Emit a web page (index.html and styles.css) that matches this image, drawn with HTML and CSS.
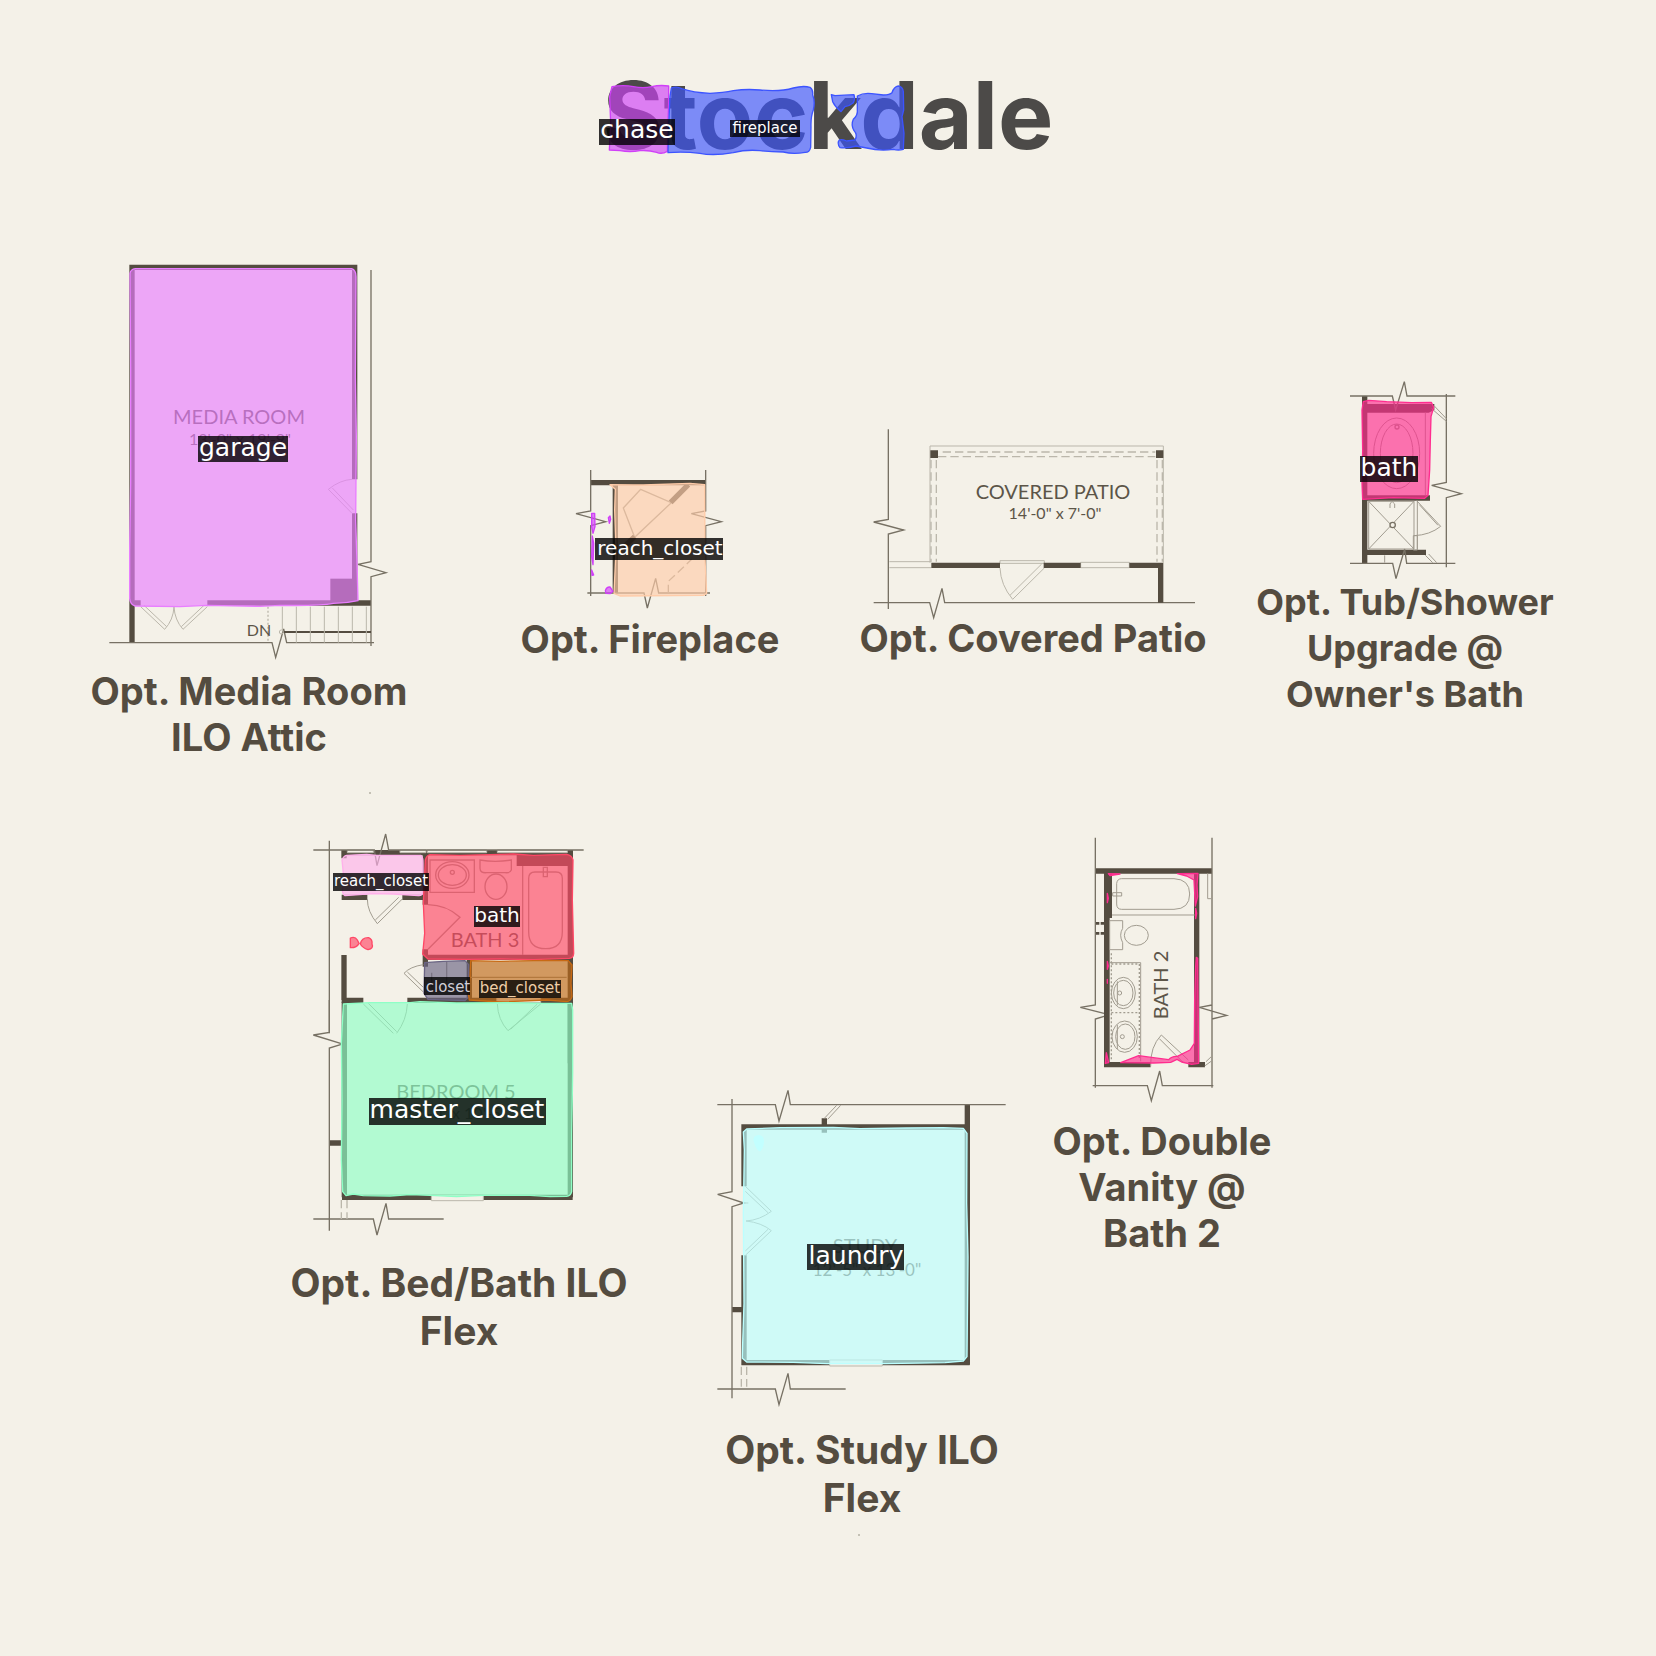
FILE: index.html
```html
<!DOCTYPE html>
<html lang="en">
<head>
<meta charset="utf-8">
<title>Stockdale floor plan options</title>
<link rel="stylesheet" href="styles.css">
</head>
<body>
<header class="title">
  <h1>Stockdale</h1>
  <svg class="title-masks" viewBox="598 60 460 110" aria-hidden="true">
    <g transform="translate(580 60) scale(.33333)">
      <path class="mask violet" d="M96 80Q130 74 160 80Q190 86 215 80Q240 74 266 78L266 130L264 180L262 274Q245 284 230 277Q205 270 180 272Q150 277 120 272L88 270L92 190L89 110Z"/>
      <path class="mask blue" d="M274 84Q290 78 305 86Q340 98 390 100Q430 98 460 92Q500 86 540 90Q600 96 640 84Q670 76 690 82Q700 90 698 104Q706 125 700 150Q692 170 693 200L692 262Q688 278 675 277Q640 284 610 276Q570 276 540 272Q500 268 460 278Q400 288 360 280Q310 274 264 278L266 200L270 110Z"/>
      <path class="mask blue" d="M754 104L765 107L822 104Q826 115 820 128Q808 138 795 140L783 155Q765 140 758 125Z"/>
      <path class="mask blue" d="M832 108Q850 98 875 101L910 105Q930 104 936 98Q942 80 955 78Q968 80 970 95L971 150L966 170L972 220L970 268Q955 272 940 268Q900 274 860 264L828 258Q800 266 780 263Q770 250 778 240Q785 237 800 243L825 240Q834 225 822 212Q812 195 820 178Q834 165 832 150Z"/>
    </g>
    <rect class="tag-bg" x="599" y="119" width="76" height="26"/><text class="tag large" x="637" y="138">chase</text>
    <rect class="tag-bg" x="730" y="120" width="70" height="17"/><text class="tag small" x="765" y="133">fireplace</text>
  </svg>
</header>

<main>
<section class="row first">
  <figure class="media">
    <svg width="320" height="404" viewBox="89 264 320 404">
      <g transform="translate(80 250) scale(.33333)">
        <path class="wall" d="M156 1178V52H824V688M824 790V1059M149 1059H182M382 1059H873"/>
        <path class="solid" d="M751 986H832V1060H751Z"/>
        <path class="line" d="M873 60V935L834 943L918 968L873 980V1188M88 1178H576L587 1222L611 1137L620 1178H882"/>
        <path class="heavy" d="M610 1146H873"/>
        <path class="thin" d="M607 1070V1140M649 1070V1178M691 1070V1178M733 1070V1178M775 1070V1178M817 1070V1178M859 1070V1178M816 688Q780 690 745 718L816 790M757 714L820 780M182 1070L254 1138Q280 1110 282 1070Q284 1110 309 1138L382 1070M192 1066L260 1130M372 1066L304 1130"/>
        <circle class="thin" cx="604" cy="1146" r="6"/>
        <path class="thin dots" d="M564 1070V1175"/>
      </g>
      <text class="room" x="239" y="424">MEDIA ROOM</text>
      <text class="room dim" x="240" y="445">13'-0" x 19'-9"</text>
      <text class="room stairs" x="259" y="636">DN</text>
      <g transform="translate(80 250) scale(.33333)">
        <path class="mask orchid" d="M166 56H815Q828 60 828 80L826 380L829 560L827 810L831 940L834 1052Q800 1060 760 1060Q720 1068 600 1066L540 1069L380 1066L300 1070L166 1068Q150 1064 149 1045V900L152 700V350L150 70Q152 58 166 56Z"/>
      </g>
      <rect class="tag-bg" x="198" y="436" width="90" height="26"/><text class="tag large" x="243" y="456">garage</text>
    </svg>
    <figcaption>Opt. Media Room<br>ILO Attic</figcaption>
  </figure>

  <figure class="fireplace">
    <svg width="220" height="152" viewBox="540 464 220 152">
      <g transform="translate(510 450) scale(.33333)">
        <path class="wall" d="M242 98H587M316 104V430"/>
        <path class="line" d="M242 60V183L198 191L287 215L242 227V438M587 60V183L544 191L634 215L587 227V438M232 429H402L412 474L437 385L446 429H600"/>
        <path class="thin mid" d="M392 118L484 158L374 262L340 174Z"/>
        <path class="thin mid dashes" d="M475 429V394L545 328"/>
        <path class="wall" d="M482 157L535 104M340 292L374 260"/>
        <path class="mask peach" d="M300 104Q340 104 400 105L540 100L584 104L585 330L590 430L580 436L330 438L312 430L318 300L314 180L316 118Z"/>
        <path class="mask purple" d="M245 190H254L255 230L249 250L245 230ZM247 258L251 280L249 344L245 320ZM245 360L251 375L246 376ZM295 203L300 198L302 208L298 220ZM286 422Q290 410 300 411L309 424L300 431L288 430Z"/>
      </g>
      <rect class="tag-bg" x="595" y="538" width="128" height="22"/><text class="tag medium" x="660" y="555">reach_closet</text>
    </svg>
    <figcaption>Opt. Fireplace</figcaption>
  </figure>

  <figure class="patio">
    <svg width="340" height="191" viewBox="863 424 340 191">
      <g transform="translate(850 410) scale(.33333)">
        <path class="line" d="M115 58V328L71 336L161 360L115 372V597M71 578H239L251 623L276 535L284 578H1035"/>
        <path class="thin" d="M240 458V108H940V458M118 455H244M118 473H244M450 452H583V460H450ZM450 474Q452 525 488 568L583 474M480 556L575 462M692 457H838V473H692Z"/>
        <path class="thin dashes" d="M278 126H916M264 140H916M243 150V455M259 150V455M921 150V455M937 150V455"/>
        <path class="wall" d="M244 466H450M581 466H692M838 466H940M932 466V578"/>
        <path class="solid" d="M241 121H264V144H241ZM918 121H940V144H918Z"/>
      </g>
      <text class="room" x="1053" y="499">COVERED PATIO</text>
      <text class="room dim" x="1055" y="519">14'-0" x 7'-0"</text>
    </svg>
    <figcaption>Opt. Covered Patio</figcaption>
  </figure>

  <figure class="tub">
    <svg width="200" height="199" viewBox="1305 380 200 199">
      <g transform="translate(1240 370) scale(.33333)">
        <path class="wall" d="M374 78V580M374 384H570M374 547H558"/>
        <path class="solid" d="M374 102H583V120L566 128H374Z"/>
        <path class="line" d="M330 78H457L467 120L493 35L501 78H646M619 72V337L575 346L664 371L619 383V592M330 580H458L468 626L494 537L500 580H646"/>
        <path class="thin grey" d="M583 108L619 146M575 116L619 154M386 394H522V537H386ZM386 394L522 537M522 394L386 537M532 392V540M530 392L602 469Q570 495 522 497M538 404L594 466M520 497H532V540H520ZM434 556V578M556 556L578 578M566 552L590 578M556 128V376M450 414V402L456 394L464 402V414"/>
        <circle class="line bg" cx="458" cy="465" r="8"/>
        <ellipse class="thin grey" cx="470" cy="250" rx="69" ry="106"/><ellipse class="thin grey" cx="470" cy="250" rx="49" ry="88"/><circle class="thin mid" cx="471" cy="171" r="6"/>
        <path class="mask pink" d="M370 95L386 91L440 95L515 98L574 97L581 112L573 140L571 210L569 300L564 376L554 385L460 383L368 388L366 340L368 240L366 120Z"/>
      </g>
      <rect class="tag-bg" x="1360" y="456" width="58" height="26"/><text class="tag large" x="1389" y="476">bath</text>
    </svg>
    <figcaption>Opt. Tub/Shower<br>Upgrade @<br>Owner's Bath</figcaption>
  </figure>
</section>

<section class="row second">
  <figure class="bed">
    <svg width="300" height="429" viewBox="309 830 300 429">
      <circle class="speck" cx="370" cy="793" r="1"/>
      <g transform="translate(300 820) scale(.33333)">
        <path class="wall" d="M125 98H818M132 90V115M125 232H202M307 232H376M376 98V254M376 388V440M811 90V730M132 405V540M125 541H190M322 541H818M376 412H818M508 416V540"/>
        <path class="solid" d="M650 98H804V138H650ZM574 90H590V104H574Z"/>
        <path class="thin bg" d="M142 90H220V98H142ZM300 90H378V98H300ZM382 90H560V98H382ZM592 90H802V98H592ZM590 532H722V548H590Z"/>
        <path class="line" d="M40 90H223L231 137L257 42L266 90H851M88 62V640"/>
        <path class="thin grey" d="M202 237Q202 275 232 311L307 237M226 300L296 232M370 434Q330 440 312 460L370 516M322 456L370 502M190 552L280 640M205 550L290 635M322 552Q320 600 290 640M592 552Q594 600 624 632L722 552M632 628L712 552"/>
        <path class="thin mid" d="M390 120H523V217H390ZM540 120Q585 128 634 120V150Q630 160 615 158L560 158Q540 160 540 145ZM668 138V405M384 254Q440 255 480 292L384 388M686 175Q686 156 705 156H768Q787 156 787 175V335Q787 386 737 386Q686 386 686 335ZM730 142H742V170H730ZM395 458V500M440 425V510M510 472H800"/>
        <ellipse class="thin mid" cx="457" cy="165" rx="50" ry="40"/><ellipse class="thin mid" cx="457" cy="165" rx="42" ry="31"/><circle class="thin mid" cx="457" cy="157" r="6"/><ellipse class="thin mid" cx="588" cy="200" rx="33" ry="38"/>
      </g>
      <g transform="translate(270 1000) scale(.33333)">
        <path class="wall" d="M223 5V592M901 5V592M216 592H908M178 429H216"/>
        <path class="thin bg" d="M484 584H640V602H484Z"/>
        <path class="line" d="M178 0V97L130 105L214 131M214 133L178 144V692M130 657H310L321 705L348 610L356 657H521"/>
        <path class="thin dashes" d="M214 600V657M231 600V657"/>
      </g>
      <text class="room" x="485" y="947">BATH 3</text>
      <text class="room" x="456" y="1099">BEDROOM 5</text>
      <text class="room dim" x="456" y="1119">12'-0" x 10'-5"</text>
      <g transform="translate(300 820) scale(.33333)">
        <path class="mask rose" d="M140 106L200 103L230 106H362Q370 112 369 130V215Q368 228 355 227L280 222L220 221L135 227Q126 222 127 205L130 160L126 120Q130 108 140 106Z"/>
        <path class="mask red" d="M390 104L480 106L640 102L700 106L800 103Q816 106 819 120L817 240L821 400Q820 414 808 415L700 419L600 417L500 418L384 417L368 402L374 340L370 250L376 120Q380 106 390 104Z"/>
        <path class="mask red" d="M151 354Q165 348 172 360L177 370Q170 384 151 383ZM181 372Q185 352 206 353Q218 358 216 372Q222 385 204 389Q188 384 181 372Z"/>
        <path class="mask slate" d="M374 428L430 424L495 422L506 434V530L495 542L384 538L372 520Z"/>
        <path class="mask orange" d="M512 422L600 424L740 421L805 422L816 435L813 490L816 530Q812 544 800 545L740 540L600 546L508 540L505 520L510 470Z"/>
      </g>
      <g transform="translate(270 1000) scale(.33333)">
        <path class="mask green" d="M220 12L300 8L420 8L450 5L560 9L720 8L820 10L905 10L908 30V220L905 400V575Q902 588 890 589L840 590L780 586L640 586L560 590L480 586L420 584L360 588L280 587L250 582L228 587L218 575L214 480L216 300L214 130Z"/>
      </g>
      <rect class="tag-bg" x="333" y="873" width="96" height="18"/><text class="tag small" x="381" y="886">reach_closet</text>
      <rect class="tag-bg" x="474" y="906" width="46" height="21"/><text class="tag medium" x="497" y="922">bath</text>
      <rect class="tag-bg" x="424" y="977" width="46" height="18"/><text class="tag small pale" x="448" y="992">closet</text>
      <rect class="tag-bg" x="479" y="980" width="82" height="18"/><text class="tag small sand" x="520" y="993">bed_closet</text>
      <rect class="tag-bg" x="369" y="1098" width="177" height="27"/><text class="tag large" x="457" y="1118">master_closet</text>
    </svg>
    <figcaption>Opt. Bed/Bath ILO<br>Flex</figcaption>
  </figure>

  <figure class="study">
    <svg width="300" height="340" viewBox="712 1086 300 340">
      <circle class="speck" cx="859" cy="1535" r="1"/>
      <g transform="translate(700 1070) scale(.33333)">
        <path class="wall" d="M124 171H809M132 164V349M132 556V884M802 104V884M124 878H809M96 719H124M373 145V188"/>
        <path class="line" d="M52 104H226L237 153L264 61L271 104H917M96 87V365L53 373L132 399L96 410V985M52 957H226L237 1004L264 910L271 957H437"/>
        <path class="thin grey" d="M373 145L410 106M383 148L422 106M136 349L214 424Q180 450 138 453Q185 458 214 482L136 556M136 364L204 428M136 543L204 478M132 399H145"/>
        <path class="thin dashes" d="M124 890V950M140 890V950"/>
        <path class="thin bg" d="M389 870H547V888H389Z"/>
      </g>
      <text class="room" x="865" y="1253">STUDY</text>
      <text class="room wide" x="867" y="1276">12'-5" x 13'-0"</text>
      <g transform="translate(700 1070) scale(.33333)">
        <path class="mask cyan" d="M140 177L240 173L400 172L480 176L620 174L730 173L790 175L801 190L800 400L804 560L801 860L790 873L735 878L560 881L380 881L280 877L140 876L127 865L128 820L132 700L130 430L133 240L130 186Z"/>
        <path class="drop" d="M176 195Q192 197 192 212Q190 242 178 244Q168 240 160 210Q160 197 176 195Z"/>
      </g>
      <rect class="tag-bg" x="807" y="1244" width="97" height="26"/><text class="tag large" x="856" y="1264">laundry</text>
    </svg>
    <figcaption>Opt. Study ILO<br>Flex</figcaption>
  </figure>

  <figure class="vanity">
    <svg width="180" height="282" viewBox="1072 836 180 282">
      <g transform="translate(1040 820) scale(.33333)">
        <path class="wall" d="M166 153H516M470 153V734M192 734H332M445 734H495"/>
        <path class="solid" d="M192 153H216V294H209V734H192Z"/>
        <path class="line" d="M166 53V555L121 562L192 580M192 589L166 597V803M516 53V803M516 597L560 586L478 562L516 555M158 797H322L334 842L359 753L367 797H520"/>
        <path class="line blind" d="M168 310H192M168 340H192"/>
        <path class="thin grey" d="M216 285H464M503 160V236H516M209 302H248V325Q236 345 248 368V389L209 389ZM332 740Q330 680 364 645L445 720M358 656L430 728M498 725L516 708M494 738L516 722"/>
        <path class="thin grey" d="M230 190Q232 176 245 176H402Q449 178 449 222Q449 267 402 268H245Q230 268 230 252ZM218 218H245V228H218Z"/>
        <ellipse class="thin grey" cx="289" cy="346" rx="36" ry="30"/>
        <path class="thin grey" d="M209 428H302V724M232 484V556M232 615V687"/>
        <path class="thin grey dots" d="M214 432H298V720M214 578H298M214 400V720"/>
        <ellipse class="thin grey" cx="250" cy="519" rx="36" ry="47"/><ellipse class="thin grey" cx="250" cy="519" rx="29" ry="38"/><circle class="thin grey" cx="239" cy="519" r="6"/>
        <ellipse class="thin grey" cx="254" cy="650" rx="38" ry="47"/><ellipse class="thin grey" cx="256" cy="650" rx="29" ry="38"/><circle class="thin grey" cx="247" cy="650" r="6"/>
      </g>
      <text class="room" transform="translate(1168 985) rotate(-90)">BATH 2</text>
      <g transform="translate(1040 820) scale(.33333)">
        <path class="mask pink" d="M205 161L240 162L210 167ZM412 161L474 160L471 195L473 230L466 258L462 180L440 168ZM467 265L470 280L467 296ZM202 220L205 235L202 248ZM202 424L205 438L202 448ZM202 478V490ZM199 698L206 728L196 730ZM469 412L473 415L476 730L455 733L425 726L411 718L392 727L340 729L242 728L296 707L340 713L386 719Q395 708 412 709L450 690L463 670L464 540L467 440Z"/>
      </g>
    </svg>
    <figcaption>Opt. Double<br>Vanity @<br>Bath 2</figcaption>
  </figure>
</section>
</main>
</body>
</html>
```
FILE: styles.css
```css
body {
  margin: 0;
  background: #f4f1e8;
  color: #544c40;
  font-family: Inter, "Liberation Sans", sans-serif;
}

/* Title and its highlighted regions */
.title {
  position: relative;
  width: 460px;
  margin: 0 auto;
  padding-top: 60px;
}
h1 {
  margin: 0;
  font-size: 93px;
  line-height: 110px;
  font-weight: 700;
  text-align: center;
  color: #4c4a48;
}
.title-masks {
  position: absolute;
  left: 0;
  bottom: 0;
  width: 100%;
  height: 110px;
}

/* Plan rows */
.row { display: grid; align-items: start; }
.first {
  grid-template-columns: 49fr 400fr 402fr 364fr 380fr 61fr;
  padding-top: 94px;
}
.second {
  grid-template-columns: 242fr 434fr 372fr 228fr 380fr;
  padding: 70px 0 134px;
}
figure {
  margin: 0;
  display: flex;
  flex-direction: column;
  align-items: center;
}
.media, .bed { grid-column-start: 2; }
.fireplace { margin-top: 200px; }
.patio { margin-top: 160px; }
.tub { margin-top: 116px; }
.study { margin-top: 256px; }
.vanity { margin-top: 6px; }
figcaption {
  font-size: 38px;
  line-height: 46px;
  font-weight: 700;
  text-align: center;
  white-space: nowrap;
}
.tub figcaption { font-size: 36px; }
.bed figcaption, .study figcaption { font-size: 39px; line-height: 48px; }

/* Drawing strokes */
svg { display: block; overflow: visible; flex: none; }
.wall, .line, .heavy, .thin { fill: none; }
.wall { stroke: #544c40; stroke-width: 16; }
.solid { fill: #544c40; }
.line { stroke: #777164; stroke-width: 4; }
.heavy { stroke: #544c40; stroke-width: 6; }
.thin { stroke: #bbb7ab; stroke-width: 3; }
.grey { stroke: #a19c90; }
.mid { stroke: #9b9588; stroke-width: 4; }
.bg { fill: #f4f1e8; }
.dots { stroke-width: 4; stroke-dasharray: 6 6; }
.dashes { stroke-width: 4; stroke-dasharray: 25 12; }
.blind { stroke: #544c40; stroke-width: 8; stroke-dasharray: 10 4; }
.speck { fill: #b5b1a5; }
.room {
  font: 400 20px Lato, "Liberation Sans", sans-serif;
  fill: #5c5548;
  text-anchor: middle;
}
.dim, .stairs { font-size: 16px; }
.wide { font-size: 17px; }

/* Segmented regions */
.mask { fill-opacity: .65; stroke-width: 4; stroke-linejoin: round; }
.violet, .purple { fill: #d040f8; stroke: #d040f8; }
.blue { fill: #3c54ff; stroke: #3c54ff; }
.orchid { fill: #e97eff; stroke: #e97eff; }
.peach { fill: #ffcca9; stroke: #ffcca9; }
.pink { fill: #ff2d8f; stroke: #ff2d8f; }
.rose { fill: #ffb0eb; stroke: #ffb0eb; }
.red { fill: #ff4866; stroke: #ff4866; }
.slate { fill: #6a6483; stroke: #6a6483; }
.orange { fill: #c06a17; stroke: #c86a14; }
.green { fill: #8fffc6; stroke: #8fffc6; }
.cyan { fill: #bcffff; stroke: #bcffff; }
.drop { fill: #c2ffff; }

/* Region name tags */
.tag-bg { fill: #000; fill-opacity: .8; }
.tag {
  font-family: "DejaVu Sans", sans-serif;
  fill: #fff;
  text-anchor: middle;
}
.large { font-size: 25px; }
.medium { font-size: 20px; }
.small { font-size: 15px; }
.pale { fill: #cfcdd8; }
.sand { fill: #f0cfa8; }
```
